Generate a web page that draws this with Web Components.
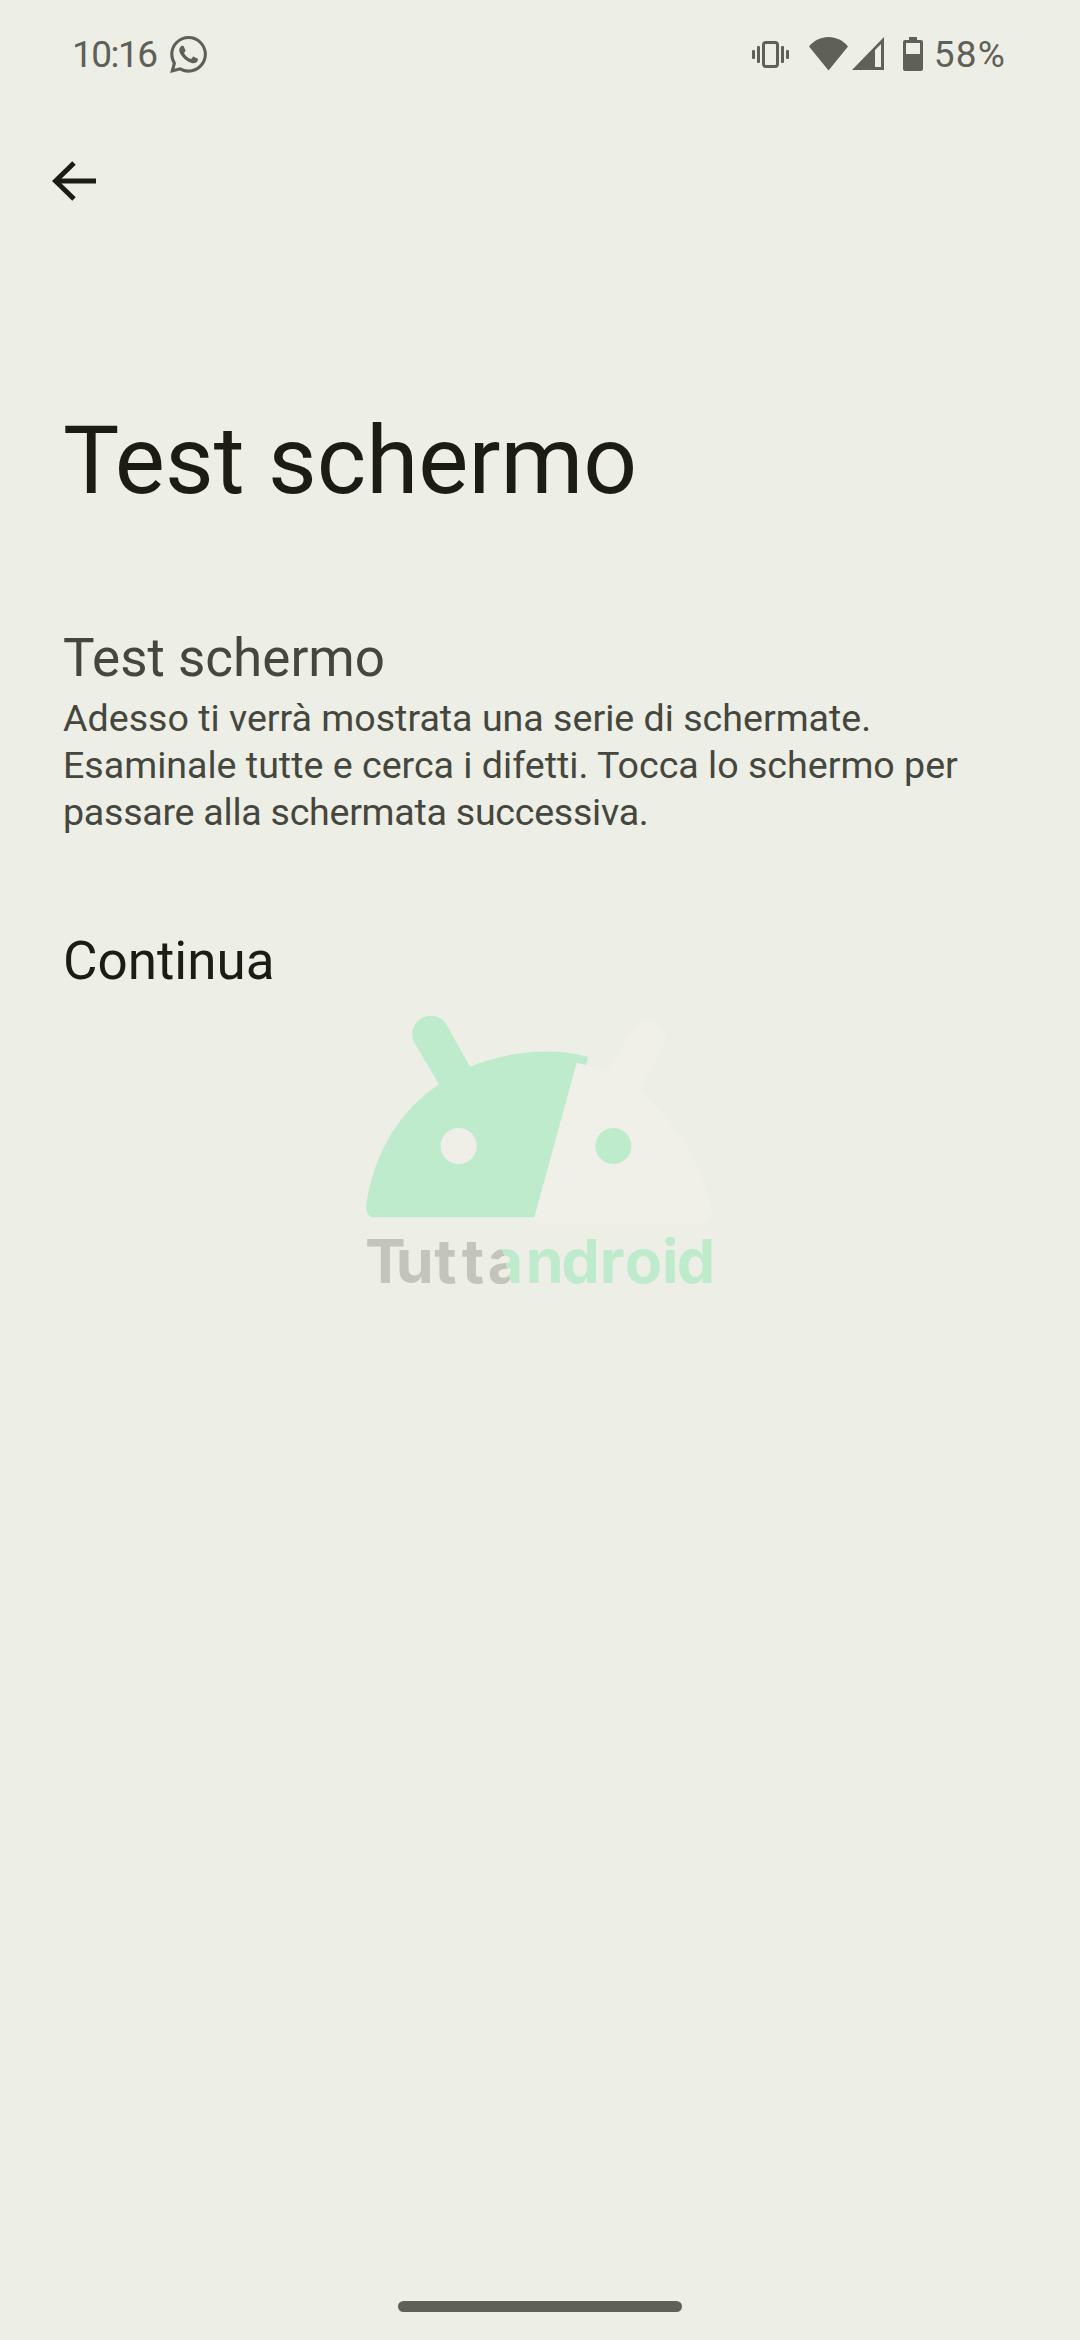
<!DOCTYPE html>
<html lang="it">
<head>
<meta charset="utf-8">
<title>Test schermo</title>
<style>
  html, body { margin: 0; padding: 0; background: #edeee5; }
  body { width: 1080px; height: 2340px; overflow: hidden; font-family: Roboto, "Noto Sans", sans-serif; }
  .tight { letter-spacing: -0.260px; }
</style>
</head>
<body>
<test-screen>
  <status-bar slot="status"></status-bar>
  <back-button slot="back"></back-button>
  <span slot="title">Test schermo</span>
  <span slot="subtitle">Test schermo</span>
  <span slot="body">Adesso ti verrà mostrata una serie di schermate.<br>Esaminale tutte e cerca i difetti. Tocca lo schermo per<br><span class="tight">passare alla schermata successiva.</span></span>
  <span slot="action">Continua</span>
</test-screen>
<script>
class StatusBar extends HTMLElement {
  constructor() {
    super();
    this.attachShadow({ mode: 'open' });
    this.shadowRoot.innerHTML = `
      <style>
        :host { display: flex; align-items: center; height: 108px; padding: 0 74px 0 72px; color: #5f6058; font-family: Roboto, sans-serif; font-size: 37px; }
        .spacer { flex: 1; }
        svg { display: block; fill: #5f6058; }
        .time { letter-spacing: -1.500px; }
        .wa { margin-left: 13px; }
        .wifi { margin-left: 20px; }
        .signal { margin-left: 4px; }
        .batt { margin-left: 19px; }
        .pct { margin-left: 11px; letter-spacing: 1.200px; }
      </style>
      <span class="time">10:16</span>
      <svg class="wa" width="37" height="37" viewBox="0 0 24 24"><path d="M17.472 14.382c-.297-.149-1.758-.867-2.03-.967-.273-.099-.471-.148-.67.15-.197.297-.767.966-.94 1.164-.173.199-.347.223-.644.075-.297-.15-1.255-.463-2.39-1.475-.883-.788-1.48-1.761-1.653-2.059-.173-.297-.018-.458.13-.606.134-.133.298-.347.446-.52.149-.174.198-.298.298-.497.099-.198.05-.371-.025-.52-.075-.149-.669-1.612-.916-2.207-.242-.579-.487-.5-.669-.51-.173-.008-.371-.01-.57-.01-.198 0-.52.074-.792.372-.272.297-1.04 1.016-1.04 2.479 0 1.462 1.065 2.875 1.213 3.074.149.198 2.096 3.2 5.077 4.487.709.306 1.262.489 1.694.625.712.227 1.36.195 1.871.118.571-.085 1.758-.719 2.006-1.413.248-.694.248-1.289.173-1.413-.074-.124-.272-.198-.57-.347m-5.421 7.403h-.004a9.87 9.87 0 01-5.031-1.378l-.361-.214-3.741.982.998-3.648-.235-.374a9.86 9.86 0 01-1.51-5.26c.001-5.45 4.436-9.884 9.888-9.884 2.64 0 5.122 1.03 6.988 2.898a9.825 9.825 0 012.893 6.994c-.003 5.45-4.437 9.884-9.885 9.884m8.413-18.297A11.815 11.815 0 0012.05 0C5.495 0 .16 5.335.157 11.892c0 2.096.547 4.142 1.588 5.945L.057 24l6.305-1.654a11.882 11.882 0 005.683 1.448h.005c6.554 0 11.89-5.335 11.893-11.893a11.821 11.821 0 00-3.48-8.413Z"/></svg>
      <div class="spacer"></div>
      <!-- vibrate -->
      <svg width="37" height="27" viewBox="0 0 37 27"><rect x="0" y="9" width="3" height="9" rx="1"/><rect x="5" y="5" width="3" height="17" rx="1"/><rect x="29" y="5" width="3" height="17" rx="1"/><rect x="34" y="9" width="3" height="9" rx="1"/><rect x="11.500" y="1.500" width="14" height="24" rx="2.500" fill="none" stroke="#5f6058" stroke-width="3"/></svg>
      <!-- wifi -->
      <svg class="wifi" width="39" height="34" viewBox="0 0 39 34"><path d="M0 9.500C5 3.500 12 0 19.500 0S34 3.500 39 9.500L19.500 33.500Z"/></svg>
      <!-- signal -->
      <svg class="signal" width="32" height="34" viewBox="0 0 32 34"><path fill-rule="evenodd" d="M32 0V33H0ZM29 7 23 13V30H29Z"/></svg>
      <!-- battery -->
      <svg class="batt" width="20" height="34" viewBox="0 0 20 34"><path d="M6 0H14V3H18Q20 3 20 5V32Q20 34 18 34H2Q0 34 0 32V5Q0 3 2 3H6Z"/><rect x="3" y="6" width="14" height="11" fill="#edeee5"/></svg>
      <span class="pct">58%</span>
    `;
  }
}

class BackButton extends HTMLElement {
  constructor() {
    super();
    this.attachShadow({ mode: 'open' });
    this.shadowRoot.innerHTML = `
      <style>
        :host { display: block; width: 44px; height: 40px; margin-left: 52px; }
        svg { display: block; }
      </style>
      <svg width="44" height="40" viewBox="0 0 44 40" fill="none" stroke="#1c1c14" stroke-width="5"><path d="M44 20H4"/><path d="M22 2 3.500 20 22 38"/></svg>
    `;
  }
}

class TuttaWatermark extends HTMLElement {
  constructor() {
    super();
    this.attachShadow({ mode: 'open' });
    this.shadowRoot.innerHTML = `
      <style>
        :host { position: absolute; left: 340px; top: 990px; width: 400px; height: 320px; pointer-events: none; }
        svg { display: block; }
        text { font-family: Inter, Lato, sans-serif; font-weight: 700; font-size: 183px; }
      </style>
      <svg width="400" height="320" viewBox="0 0 1200 960">
        <defs>
          <linearGradient id="split" gradientUnits="userSpaceOnUse" x1="500" y1="830" x2="600" y2="804">
            <stop offset="0" stop-color="#c3c4bb"/><stop offset="0" stop-color="#bfebcd"/>
          </linearGradient>
        </defs>
        <path fill="#f0f0e8" d="M583 682 710 218 800 245 880 115A52 52 0 0 1 968 175L897 300C1010 400 1090 520 1118 670Q1116 702 1085 702H590Z"/>
        <path fill="#bfebcd" d="M105 682H583L710 218 738 225 745 200C630 170 500 185 390 230L320 105A55 55 0 0 0 224 160L297 283C180 360 100 490 78 650Q78 682 105 682Z"/>
        <circle cx="356" cy="468" r="54" fill="#efefe7"/>
        <circle cx="820" cy="468" r="54" fill="#bfebcd"/>
        <text x="75 167 283 365 443 557 664 779 854 966 1010" y="878" fill="url(#split)">Tuttandroid</text>
      </svg>
    `;
  }
}

class TestScreen extends HTMLElement {
  constructor() {
    super();
    this.attachShadow({ mode: 'open' });
    this.shadowRoot.innerHTML = `
      <style>
        :host { display: block; position: relative; width: 1080px; height: 2340px; background: #edeee5; overflow: hidden; font-family: Roboto, "Noto Sans", sans-serif; }
        .back { padding-top: 53px; }
        main { padding: 0 63px; }
        h1 { margin: 200px 0 0; font-size: 94.500px; line-height: 120px; font-weight: 400; color: #1c1c14; }
        h2 { margin: 106px 0 0; font-size: 53px; line-height: 62px; font-weight: 400; color: #45473e; }
        p { margin: 6px 0 0; font-size: 37.600px; line-height: 47px; color: #45473e; }
        .action { margin-top: 94px; font-size: 53px; line-height: 62px; color: #1c1c14; }
        .pill { position: absolute; left: 398px; bottom: 28px; width: 284px; height: 11px; border-radius: 6px; background: #5f6058; }
      </style>
      <slot name="status"></slot>
      <div class="back"><slot name="back"></slot></div>
      <main>
        <h1><slot name="title"></slot></h1>
        <h2><slot name="subtitle"></slot></h2>
        <p><slot name="body"></slot></p>
        <div class="action"><slot name="action"></slot></div>
      </main>
      <tutta-watermark></tutta-watermark>
      <div class="pill"></div>
    `;
  }
}

customElements.define('status-bar', StatusBar);
customElements.define('back-button', BackButton);
customElements.define('tutta-watermark', TuttaWatermark);
customElements.define('test-screen', TestScreen);
</script>
</body>
</html>
